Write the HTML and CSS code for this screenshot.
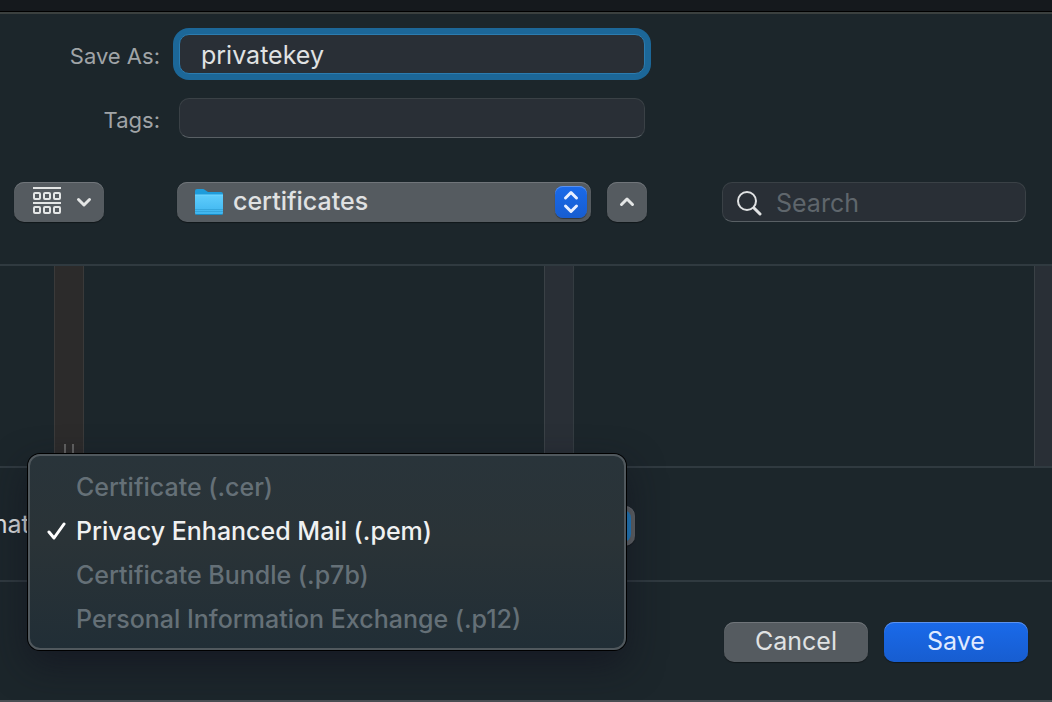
FILE: index.html
```
<!DOCTYPE html>
<html lang="en">
<head>
    <meta charset="UTF-8">
    <title>Save</title>
    <link rel="stylesheet" href="styles.css">
</head>
<body>
    <form class="dialog">
        <div class="fields">
            <label for="save-as">Save As:</label>
            <input type="text" id="save-as" class="field focused" value="privatekey">
            <label for="tags">Tags:</label>
            <input type="text" id="tags" class="field">
        </div>

        <div class="toolbar">
            <button type="button" class="btn view-btn" aria-label="View options">
                <svg width="28" height="28" viewBox="0 0 28 28" fill="none" stroke="#e4e6e6" stroke-width="2">
                    <path d="M0 1h28M0 16h28"/>
                    <rect x="1" y="6" width="6" height="6" rx="1"/>
                    <rect x="11" y="6" width="6" height="6" rx="1"/>
                    <rect x="21" y="6" width="6" height="6" rx="1"/>
                    <rect x="1" y="20" width="6" height="6" rx="1"/>
                    <rect x="11" y="20" width="6" height="6" rx="1"/>
                    <rect x="21" y="20" width="6" height="6" rx="1"/>
                </svg>
                <svg width="16" height="12" viewBox="0 0 16 12" fill="none" stroke="#e4e6e6" stroke-width="3" stroke-linecap="round" stroke-linejoin="round">
                    <path d="M2.5 3.5L8 9l5.500-5.500"/>
                </svg>
            </button>
            <div class="popup location">
                <select class="popup-select" aria-label="Location">
                    <option>certificates</option>
                </select>
                <svg class="folder" width="30" height="28" viewBox="0 0 30 28">
                    <defs>
                        <linearGradient id="folder-front" x1="0" y1="0" x2="0" y2="1">
                            <stop offset="0" stop-color="#5fcdfc"/>
                            <stop offset="1" stop-color="#3db4ee"/>
                        </linearGradient>
                    </defs>
                    <path d="M1 3q0-2 2-2h6q1 0 2 1l3 2h13q2 0 2 2v8H1z" fill="#1e9cdb"/>
                    <path d="M1 7h28v18q0 2-2 2H3q-2 0-2-2z" fill="url(#folder-front)"/>
                    <path d="M1 7h28" stroke="#74d6ff"/>
                    <path d="M1 21.500h28M1 23.500h28" stroke="#2b9ad0" opacity=".6"/>
                    <path d="M2 26.500h26" stroke="#188bc4"/>
                </svg>
                <span class="stepper">
                    <svg width="16" height="24" viewBox="0 0 16 24" fill="none" stroke="#e8efff" stroke-width="3" stroke-linecap="round" stroke-linejoin="round">
                        <path d="M2.500 8L8 2.500 13.500 8M2.500 16L8 21.500 13.500 16"/>
                    </svg>
                </span>
            </div>
            <button type="button" class="btn up-btn" aria-label="Collapse">
                <svg width="16" height="12" viewBox="0 0 16 12" fill="none" stroke="#e4e6e6" stroke-width="3" stroke-linecap="round" stroke-linejoin="round">
                    <path d="M2.500 8.500L8 3l5.500 5.500"/>
                </svg>
            </button>
            <div class="search">
                <svg width="26" height="26" viewBox="0 0 26 26" fill="none" stroke="#e0e2e3" stroke-linecap="round">
                    <circle cx="11" cy="11" r="9" stroke-width="2"/>
                    <path d="M18 18l6 6" stroke-width="3"/>
                </svg>
                <input type="search" placeholder="Search" aria-label="Search">
            </div>
        </div>

        <div class="browser">
            <div class="column"></div>
            <div class="scroller active"><span class="grip"></span></div>
            <div class="column"></div>
            <div class="scroller"></div>
            <div class="column"></div>
            <div class="scroller last"></div>
        </div>

        <div class="format-row">
            <label class="format-label" for="format"><span>File Format:</span></label>
            <div class="popup format">
                <select id="format" class="popup-select">
                    <option>Privacy Enhanced Mail (.pem)</option>
                </select>
                <span class="stepper light"></span>
            </div>
            <div class="menu" role="menu">
                <button type="button" role="menuitemradio" aria-checked="false" disabled>Certificate (.cer)</button>
                <button type="button" role="menuitemradio" aria-checked="true">
                    <svg class="check" width="20" height="20" viewBox="0 0 20 20" fill="none" stroke="#fff" stroke-width="3" stroke-linecap="round" stroke-linejoin="round">
                        <path d="M2 11l5 6L17 3"/>
                    </svg>Privacy Enhanced Mail (.pem)</button>
                <button type="button" role="menuitemradio" aria-checked="false" disabled>Certificate Bundle (.p7b)</button>
                <button type="button" role="menuitemradio" aria-checked="false" disabled>Personal Information Exchange (.p12)</button>
            </div>
        </div>

        <div class="actions">
            <button type="button" class="btn action-btn">Cancel</button>
            <button type="submit" class="btn action-btn primary">Save</button>
        </div>
    </form>
</body>
</html>
```
FILE: styles.css
```
* { box-sizing: border-box; }
body { margin: 0; padding-top: 12px; min-height: 100vh; display: flex; flex-direction: column; background-color: #15191d; font-family: Inter, "Liberation Sans", sans-serif; font-size: 25px; color: #e0e2e3; }
button, input, select { font: inherit; color: inherit; margin: 0; outline: none; }
svg { display: block; flex: none; }

.dialog { flex: 1; display: flex; flex-direction: column; background-color: #1c262b; border-top: 2px solid #3b403f; border-bottom: 2px solid #4a4e53; box-shadow: 0 -1px 0 #000; overflow: hidden; }

/* name and tags */
.fields { display: grid; grid-template-columns: 160px minmax(0, 466px); column-gap: 19px; row-gap: 24px; align-items: center; padding: 20px 20px 0 0; }
.fields label { text-align: right; font-size: 22px; color: #a0a4a7; padding-top: 4px; }
.field { width: 100%; height: 40px; padding: 2px 21px 0; border: 1px solid #3a4146; border-bottom-color: #596065; border-radius: 10px; background-color: #292f36; }
.field.focused { border-color: #2b7cb0; box-shadow: 0 0 0 6px #1c6798; }

/* buttons and pop-ups */
.btn { height: 40px; border: none; border-radius: 10px; background-color: #555b60; box-shadow: inset 0 1px 0 #70757a, 0 1px 1px rgba(0,0,0,0.4); display: flex; align-items: center; justify-content: center; padding: 0; }
.primary { background: linear-gradient(#1a6aea, #175dd0); box-shadow: inset 0 1px 0 #5c92ee, 0 1px 1px rgba(0,0,0,0.4); color: #e0eaff; }
.popup { position: relative; height: 40px; }
.popup-select { appearance: none; width: 100%; height: 40px; border: none; border-radius: 10px; background-color: #555b60; box-shadow: inset 0 1px 0 #70757a, 0 1px 1px rgba(0,0,0,0.4); padding: 0 40px 2px 56px; font-weight: 500; }
.folder { position: absolute; left: 17px; top: 6px; }
.stepper { position: absolute; right: 4px; top: 4px; width: 32px; height: 32px; border-radius: 8px; background: linear-gradient(#1a6aea, #175dd0); box-shadow: inset 0 1px 0 #5c92ee, 0 1px 1px rgba(0,0,0,0.4); display: flex; align-items: center; justify-content: center; pointer-events: none; }
.stepper.light { background: #2288d2; box-shadow: none; }

.toolbar { display: flex; align-items: center; padding: 44px 26px 42px 14px; }
.view-btn { width: 90px; gap: 15px; padding-left: 7px; margin-right: 73px; }
.view-btn svg:first-child { margin-bottom: 2px; }
.location { flex: 0 1 414px; margin-right: 16px; }
.up-btn { width: 40px; }
.search { flex: 0 1 304px; min-width: 0; margin-left: auto; height: 40px; display: flex; align-items: center; gap: 14px; padding: 2px 13px 0; border: 1px solid #3a4146; border-bottom-color: #596065; border-radius: 10px; background-color: #292f36; }
.search input { flex: 1; min-width: 0; border: none; padding: 0; background: none; }
.search input::placeholder { color: #5f666c; }

/* column browser */
.browser { display: grid; grid-template-columns: 54px 30px 1fr 30px 1fr 18px; height: 204px; border-top: 2px solid #303a40; border-bottom: 2px solid #303a40; }
.scroller { background-color: #292f36; border-left: 1px solid #3a4146; border-right: 1px solid #343c41; }
.scroller.last { border-right: none; }
.scroller.active { background-color: #2c2b2b; border-color: #3a3a3a; display: flex; align-items: flex-end; justify-content: center; }
.grip { width: 10px; height: 12px; margin-bottom: 10px; border: 2px solid #626262; border-width: 0 2px; }

/* file format */
.format-row { position: relative; display: flex; align-items: center; gap: 10px; height: 114px; border-bottom: 2px solid #303a40; }
.format-label { width: 37px; display: flex; justify-content: flex-end; font-size: 25px; white-space: nowrap; }
.format { width: 588px; margin-top: 4px; }
.format .popup-select { background-color: #65696c; }
.menu { position: absolute; left: 28px; top: -14px; width: 598px; padding: 9px 0 7px; border: 2px solid #50585d; border-radius: 12px; background: linear-gradient(#29343a, #2a3337 45%, #212e36); box-shadow: 0 0 0 1px #000, 0 14px 36px rgba(18,18,30,0.65); }
.menu button { position: relative; display: block; width: 100%; height: 44px; padding: 0 46px; border: none; background: none; text-align: left; white-space: nowrap; font-weight: 500; color: #f0f1f1; }
.menu button:disabled { color: #657077; }
.check { position: absolute; left: 17px; top: 12px; }

.actions { flex: 1; display: flex; align-items: flex-start; justify-content: flex-end; gap: 16px; padding: 40px 24px 38px; }
.action-btn { width: 144px; padding-bottom: 2px; }
```
